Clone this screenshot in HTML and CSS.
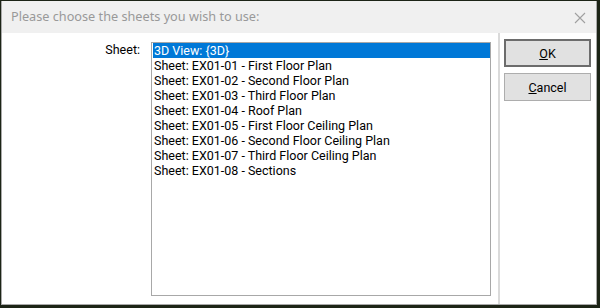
FILE: index.html
```html
<!DOCTYPE html>
<html>
<head>
<meta charset="utf-8">
<link rel="stylesheet" href="styles.css">
</head>
<body>
<div class="window">
  <div class="titlebar">
    <span class="title">Please choose the sheets you wish to use:</span>
    <svg class="close" width="12" height="12" viewBox="0 0 12 12"><path d="M1 1 L11 11 M11 1 L1 11" stroke="#a0a0a0" stroke-width="1.1" fill="none"/></svg>
  </div>
  <div class="content">
    <div class="main">
      <div class="label">Sheet:</div>
      <div class="listbox">
        <div class="item selected">3D View: {3D}</div>
        <div class="item">Sheet: EX01-01 - First Floor Plan</div>
        <div class="item">Sheet: EX01-02 - Second Floor Plan</div>
        <div class="item">Sheet: EX01-03 - Third Floor Plan</div>
        <div class="item">Sheet: EX01-04 - Roof Plan</div>
        <div class="item">Sheet: EX01-05 - First Floor Ceiling Plan</div>
        <div class="item">Sheet: EX01-06 - Second Floor Ceiling Plan</div>
        <div class="item">Sheet: EX01-07 - Third Floor Ceiling Plan</div>
        <div class="item">Sheet: EX01-08 - Sections</div>
      </div>
    </div>
    <div class="side">
      <button class="btn default"><u>O</u>K</button>
      <button class="btn"><u>C</u>ancel</button>
    </div>
  </div>
</div>
</body>
</html>
```

FILE: styles.css
```css
*, *::before, *::after {
  box-sizing: border-box;
}
html, body {
  margin: 0;
  padding: 0;
}
body {
  width: 600px;
  height: 308px;
  background: #1c2416;
  overflow: hidden;
  font-family: Roboto, "Noto Sans", sans-serif;
}
.window {
  margin: 1px 0 0 1px;
  width: 596px;
  height: 304px;
  border: 1px solid #a9a9a9;
  border-top: none;
  background: #fff;
  display: flex;
  flex-direction: column;
}
.titlebar {
  height: 32px;
  flex: none;
  background: #f0f0f0;
  display: flex;
  align-items: center;
  justify-content: space-between;
  padding: 0 9px 0 9px;
}
.title {
  font-family: "Noto Sans", sans-serif;
  font-size: 12.7px;
  color: #999;
  margin-top: -2px;
}
.close {
  margin-right: 1px;
  margin-top: 1px;
}
.content {
  flex: 1;
  display: flex;
}
.main {
  flex: 1;
  display: flex;
  align-items: flex-start;
  padding: 9px 7px 8px 0;
}
.label {
  width: 138px;
  text-align: right;
  font-size: 12.5px;
  color: #000;
  margin-right: 11px;
  line-height: 15px;
}
.listbox {
  flex: 1;
  align-self: stretch;
  border: 1px solid #a8a8a8;
  padding: 0 0 0 1px;
}
.item {
  font-size: 12.5px;
  line-height: 15px;
  padding-left: 1px;
  color: #000;
  white-space: nowrap;
}
.item.selected {
  background: #0078d7;
  color: #fff;
}
.side {
  width: 98px;
  flex: none;
  border-left: 2px solid #dadada;
  padding: 6px 5px 0 4px;
  display: flex;
  flex-direction: column;
  gap: 6px;
}
.btn {
  height: 28px;
  width: 87px;
  background: #e1e1e1;
  border: 1px solid #adadad;
  font-family: Roboto, "Noto Sans", sans-serif;
  font-size: 12.5px;
  color: #000;
  padding: 0;
}
.btn.default {
  border: 2px solid #6c6c6c;
}
```
